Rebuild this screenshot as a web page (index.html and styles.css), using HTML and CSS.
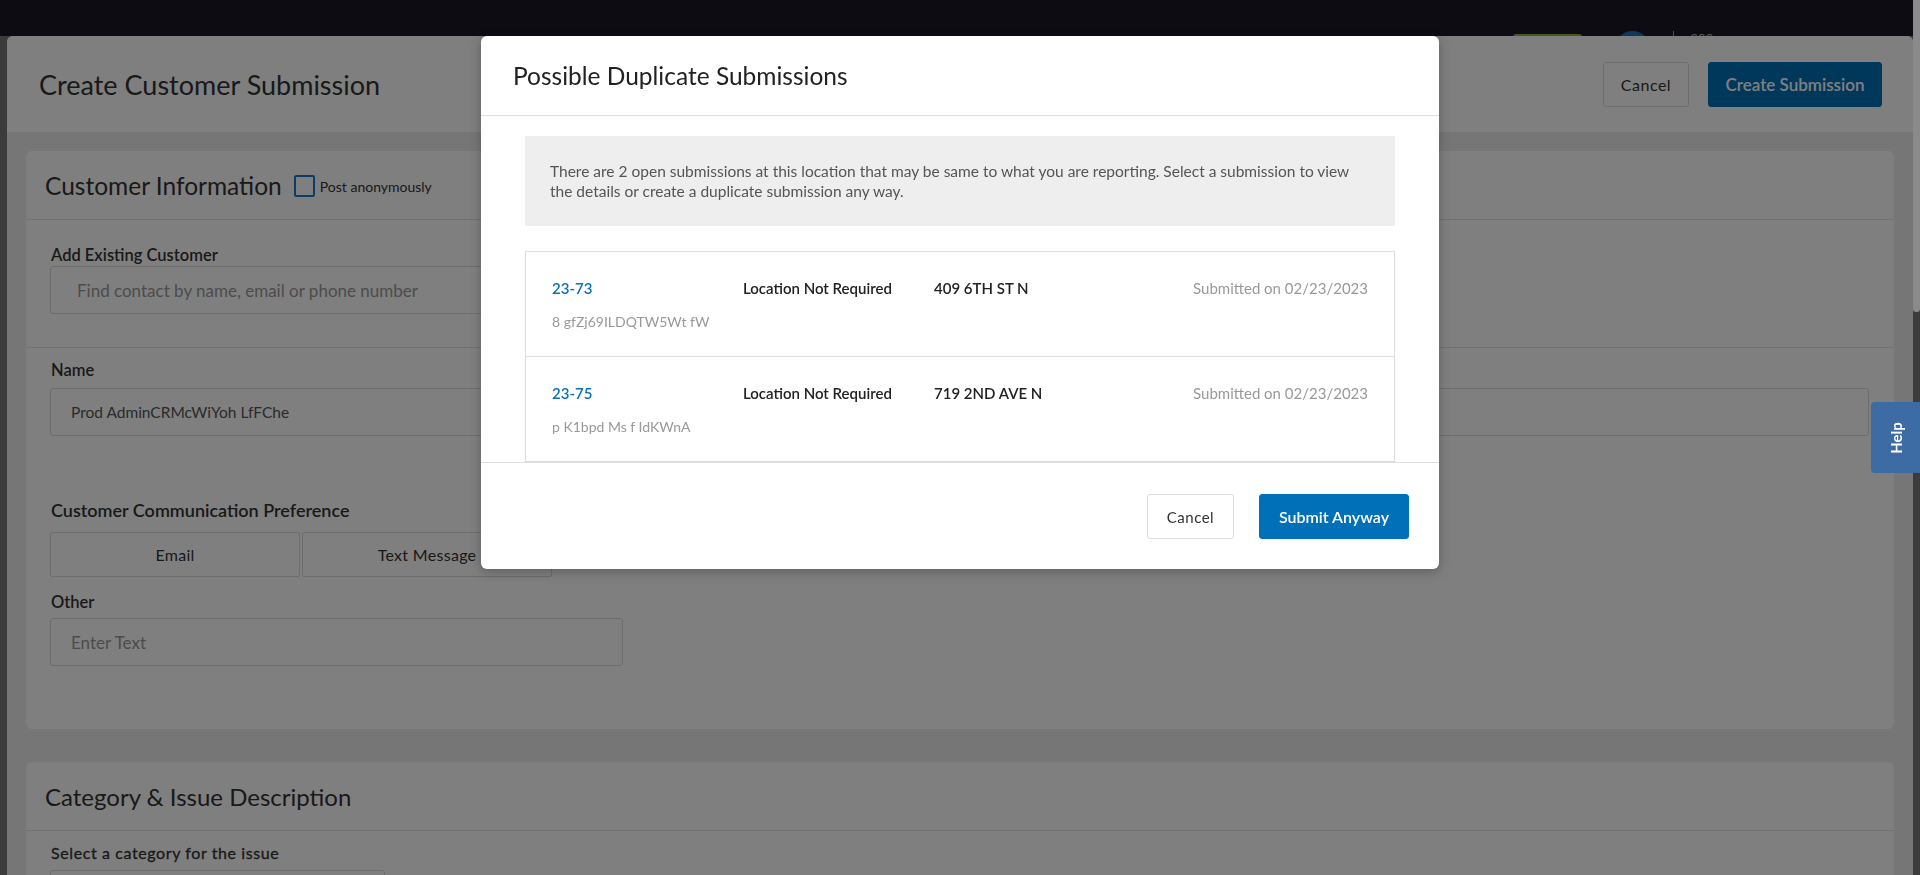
FILE: index.html
```html
<!DOCTYPE html>
<html lang="en">
<head>
<meta charset="utf-8">
<title>Create Customer Submission</title>
<link rel="stylesheet" href="styles.css">
</head>
<body>
  <div class="app">
    <nav class="topbar">
      <div class="topbar-tools">
        <span class="env-badge"></span>
        <span class="avatar"></span>
        <span class="divider"></span>
        <span class="user">SSS</span>
      </div>
    </nav>

    <main class="sheet">
      <header class="sheet-header">
        <h1 class="sheet-title">Create Customer Submission</h1>
        <div class="sheet-actions">
          <button class="btn btn-default btn-lg">Cancel</button>
          <button class="btn btn-primary btn-lg">Create Submission</button>
        </div>
      </header>

      <div class="sheet-body">
        <section class="card">
          <div class="card-head">
            <h2 class="card-title">Customer Information</h2>
            <label class="check"><span class="check-box"></span><span>Post anonymously</span></label>
          </div>
          <div class="card-section card-section-first">
            <div class="field-label">Add Existing Customer</div>
            <div class="input input-search placeholder">Find contact by name, email or phone number</div>
          </div>
          <div class="card-section card-section-main">
            <div class="field-label">Name</div>
            <div class="input input-name">Prod AdminCRMcWiYoh LfFChe</div>

            <div class="field-label field-label-lg">Customer Communication Preference</div>
            <div class="segments">
              <span class="segment">Email</span>
              <span class="segment">Text Message</span>
            </div>

            <div class="field-label field-label-other">Other</div>
            <div class="input input-other placeholder">Enter Text</div>
          </div>
        </section>

        <section class="card">
          <div class="card-head">
            <h2 class="card-title card-title-cat">Category &amp; Issue Description</h2>
          </div>
          <div class="card-section card-section-cat">
            <div class="field-label field-label-cat">Select a category for the issue</div>
            <div class="input input-select"></div>
          </div>
        </section>
      </div>
    </main>
  </div>

  <div class="scrollbar"><div class="scrollbar-thumb"></div></div>

  <div class="backdrop"></div>

  <div class="modal-layer">
    <div class="modal" role="dialog" aria-labelledby="dup-title">
      <div class="modal-head">
        <h2 id="dup-title" class="modal-title">Possible Duplicate Submissions</h2>
      </div>
      <div class="modal-body">
        <p class="notice">There are 2 open submissions at this location that may be same to what you are reporting. Select a submission to view the details or create a duplicate submission any way.</p>
        <ul class="dups">
          <li class="dup">
            <a class="dup-id" href="#">23-73</a>
            <span class="dup-loc">Location Not Required</span>
            <span class="dup-addr">409 6TH ST N</span>
            <span class="dup-date">Submitted on 02/23/2023</span>
            <span class="dup-desc">8 gfZj69ILDQTW5Wt fW</span>
          </li>
          <li class="dup">
            <a class="dup-id" href="#">23-75</a>
            <span class="dup-loc">Location Not Required</span>
            <span class="dup-addr">719 2ND AVE N</span>
            <span class="dup-date">Submitted on 02/23/2023</span>
            <span class="dup-desc">p K1bpd Ms f IdKWnA</span>
          </li>
        </ul>
      </div>
      <div class="modal-foot">
        <button class="btn btn-default btn-md">Cancel</button>
        <button class="btn btn-primary btn-md">Submit Anyway</button>
      </div>
    </div>
  </div>

  <button class="help-tab"><span>Help</span></button>
</body>
</html>
```

FILE: styles.css
```css
* { box-sizing: border-box; }

html, body {
  margin: 0;
  height: 100%;
}

body {
  font-family: "Lato", "Liberation Sans", sans-serif;
  color: #333;
  background: #767676;
  overflow: hidden;
  display: flex;
}

h1, h2, p, ul { margin: 0; padding: 0; }

.app {
  flex: 1;
  min-width: 0;
  display: flex;
  flex-direction: column;
  height: 100%;
}

/* top navigation (mostly covered) */
.topbar {
  height: 36px;
  flex: none;
  background: #181824;
  display: flex;
  justify-content: flex-end;
  overflow: hidden;
  padding-right: 200px;
}
.topbar-tools {
  display: flex;
  align-items: flex-start;
}
.env-badge {
  width: 69px;
  height: 30px;
  margin-top: 34px;
  background: #8fb03e;
  border-radius: 3px;
}
.avatar {
  width: 35px;
  height: 35px;
  margin: 31px 0 0 33px;
  border-radius: 50%;
  background: #1a74b4;
}
.divider {
  width: 1px;
  height: 30px;
  margin: 31px 0 0 23px;
  background: #9a9a9a;
}
.user {
  margin: 31px 0 0 16px;
  color: #aaa;
  font-size: 14px;
  line-height: 16px;
}

/* main sheet */
.sheet {
  position: relative;
  flex: 1;
  margin-left: 7px;
  background: #ececec;
  border-radius: 6px 6px 0 0;
  overflow: hidden;
}
.sheet-header {
  height: 96px;
  background: #fff;
  padding: 0 31px 0 32px;
  display: flex;
  align-items: center;
  justify-content: space-between;
}
.sheet-title {
  font-size: 27px;
  font-weight: 400;
  color: #333;
}
.sheet-actions {
  display: flex;
  gap: 19px;
}

.btn {
  font-family: inherit;
  border-radius: 3px;
  border: 1px solid #ddd;
  background: #fff;
  color: #333;
  cursor: pointer;
  padding: 0;
}
.btn-lg {
  height: 45px;
  font-size: 16px;
}
.btn-lg.btn-default { width: 86px; letter-spacing: .5px; }
.btn-lg.btn-primary { width: 174px; font-size: 17px; }
.btn-md {
  height: 45px;
  font-size: 15px;
}
.btn-md.btn-default { width: 87px; letter-spacing: .5px; }
.btn-md.btn-primary { width: 150px; font-size: 16px; }
.btn-primary {
  background: #0071b9;
  border-color: #0071b9;
  color: #fff;
  font-weight: 600;
}

.sheet-body {
  padding: 19px;
  display: flex;
  flex-direction: column;
  gap: 33px;
}

.card {
  background: #fff;
  border-radius: 6px;
}
.card-head {
  height: 69px;
  padding: 0 19px;
  border-bottom: 1px solid #e2e2e2;
  display: flex;
  align-items: center;
  gap: 12px;
}
.card-title {
  font-size: 24.5px;
  font-weight: 400;
  color: #333;
}
.card-title-cat { font-size: 24px; }
.check {
  display: flex;
  align-items: center;
  gap: 5px;
  font-size: 14px;
  color: #333;
  margin-top: 2px;
}
.check-box {
  width: 21px;
  height: 22px;
  border: 2px solid #1a7acc;
  border-radius: 2px;
  background: #fff;
}

.card-section {
  padding: 0 25px 0 24px;
}
.card-section-first {
  padding-top: 25px;
  padding-bottom: 33px;
  border-bottom: 1px solid #e2e2e2;
}
.card-section-main {
  padding-top: 12px;
  padding-bottom: 63px;
}
.card-section-cat {
  padding-top: 12px;
}

.field-label {
  font-size: 16.5px;
  line-height: 20px;
  font-weight: 600;
  color: #333;
  padding-left: 1px;
}
.field-label-lg {
  font-size: 18px;
  line-height: 24px;
  margin-top: 62px;
}
.field-label-other { margin-top: 15px; }
.field-label-cat {
  font-weight: 400;
  letter-spacing: .6px;
  font-size: 16px;
  -webkit-text-stroke: .3px #333;
}

.input {
  height: 48px;
  border: 1px solid #dadada;
  border-radius: 3px;
  background: #fff;
  font-size: 15.5px;
  color: #555;
  display: flex;
  align-items: center;
  padding-left: 20px;
}
.placeholder { color: #999; font-size: 17px; }
.input-search {
  margin-top: 1px;
  width: 800px;
  padding-left: 26px;
}
.input-name { margin-top: 8px; }
.input-other {
  margin-top: 6px;
  width: 573px;
}
.input-select {
  margin-top: 7px;
  width: 335px;
}

.segments {
  display: flex;
  gap: 2px;
  margin-top: 10px;
}
.segment {
  width: 250px;
  height: 45px;
  border: 1px solid #dadada;
  border-radius: 2px;
  display: flex;
  align-items: center;
  justify-content: center;
  font-size: 16px;
  color: #333;
  letter-spacing: .3px;
}

/* custom scrollbar strip */
.scrollbar {
  width: 7px;
  flex: none;
  background: #3b3b3b;
  position: relative;
  z-index: 3;
}
.scrollbar-thumb {
  height: 312px;
  background: #8a8a8a;
  border-radius: 0 0 3px 3px;
}

/* overlay + modal */
.backdrop {
  position: fixed;
  inset: 0;
  background: rgba(0, 0, 0, .5);
  z-index: 2;
}
.modal-layer {
  position: fixed;
  inset: 0;
  z-index: 4;
  display: flex;
  justify-content: center;
  align-items: flex-start;
  padding-top: 36px;
}
.modal {
  width: 958px;
  background: #fff;
  border-radius: 6px;
  overflow: hidden;
  box-shadow: 0 3px 12px rgba(0, 0, 0, .25);
}
.modal-head {
  height: 80px;
  padding: 0 32px;
  border-bottom: 1px solid #dedede;
  display: flex;
  align-items: center;
}
.modal-title {
  font-size: 24.5px;
  font-weight: 400;
  color: #222;
}
.modal-body {
  padding: 20px 44px 0;
}
.notice {
  background: #eee;
  padding: 25px 30px 25px 25px;
  font-size: 15.5px;
  line-height: 20px;
  color: #555;
}
.dups {
  list-style: none;
  margin-top: 25px;
  border: 1px solid #ddd;
}
.dup {
  display: grid;
  grid-template-columns: 191px 191px 1fr auto;
  row-gap: 14px;
  padding: 26px 26px 24px;
  font-size: 15px;
  line-height: 20px;
}
.dup + .dup { border-top: 1px solid #ddd; }
.dup-id {
  color: #0a6fb6;
  font-weight: 600;
  text-decoration: none;
  font-size: 15px;
}
.dup-loc, .dup-addr {
  color: #222;
  font-weight: 600;
}
.dup-date {
  color: #999;
  text-align: right;
}
.dup-desc {
  grid-column: 1 / span 3;
  color: #999;
  font-size: 14px;
}
.modal-foot {
  border-top: 1px solid #dedede;
  padding: 31px 30px 30px;
  display: flex;
  justify-content: flex-end;
  gap: 25px;
}

/* help tab */
.help-tab {
  position: fixed;
  right: 0;
  top: 402px;
  width: 49px;
  height: 71px;
  z-index: 5;
  border: 0;
  border-radius: 4px 0 0 4px;
  background: #3d6ba3;
  color: #fff;
  font-family: inherit;
  font-weight: 700;
  font-size: 15px;
  display: flex;
  align-items: center;
  justify-content: center;
  padding: 0;
}
.help-tab span {
  transform: rotate(-90deg);
  display: block;
}
```
